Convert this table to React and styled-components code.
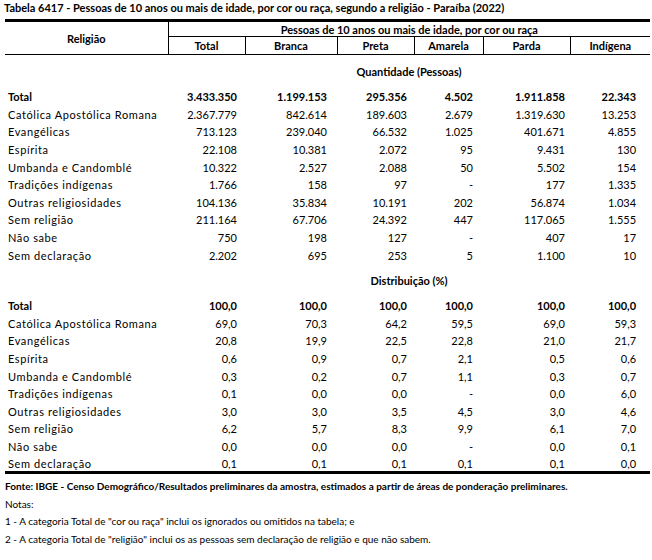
import React from "react";
import styled, { createGlobalStyle } from "styled-components";

const GlobalStyle = createGlobalStyle`
  body {
    margin: 0;
    background: #fff;
    color: #000;
    font-family: Lato, "Liberation Sans", sans-serif;
  }
`;

const COLS = [
  { name: "Total", width: 77, pad: 8 },
  { name: "Branca", width: 92, pad: 10 },
  { name: "Preta", width: 77, pad: 7 },
  { name: "Amarela", width: 69, pad: 10 },
  { name: "Parda", width: 87, pad: 5 },
  { name: "Indígena", width: 80, pad: 14 },
];

const LABELS = [
  "Católica Apostólica Romana",
  "Evangélicas",
  "Espírita",
  "Umbanda e Candomblé",
  "Tradições indígenas",
  "Outras religiosidades",
  "Sem religião",
  "Não sabe",
  "Sem declaração",
];

const quantidade = {
  total: ["3.433.350", "1.199.153", "295.356", "4.502", "1.911.858", "22.343"],
  rows: [
    ["2.367.779", "842.614", "189.603", "2.679", "1.319.630", "13.253"],
    ["713.123", "239.040", "66.532", "1.025", "401.671", "4.855"],
    ["22.108", "10.381", "2.072", "95", "9.431", "130"],
    ["10.322", "2.527", "2.088", "50", "5.502", "154"],
    ["1.766", "158", "97", "-", "177", "1.335"],
    ["104.136", "35.834", "10.191", "202", "56.874", "1.034"],
    ["211.164", "67.706", "24.392", "447", "117.065", "1.555"],
    ["750", "198", "127", "-", "407", "17"],
    ["2.202", "695", "253", "5", "1.100", "10"],
  ],
};

const distribuicao = {
  total: ["100,0", "100,0", "100,0", "100,0", "100,0", "100,0"],
  rows: [
    ["69,0", "70,3", "64,2", "59,5", "69,0", "59,3"],
    ["20,8", "19,9", "22,5", "22,8", "21,0", "21,7"],
    ["0,6", "0,9", "0,7", "2,1", "0,5", "0,6"],
    ["0,3", "0,2", "0,7", "1,1", "0,3", "0,7"],
    ["0,1", "0,0", "0,0", "-", "0,0", "6,0"],
    ["3,0", "3,0", "3,5", "4,5", "3,0", "4,6"],
    ["6,2", "5,7", "8,3", "9,9", "6,1", "7,0"],
    ["0,0", "0,0", "0,0", "-", "0,0", "0,1"],
    ["0,1", "0,1", "0,1", "0,1", "0,1", "0,0"],
  ],
};

const App = () => {
  const renderSection = (title, data) => (
    <>
      <tr>
        <SectionCell />
        <SectionCell colSpan={6}>{title}</SectionCell>
      </tr>
      <DataRow>
        <LabelCell bold>Total</LabelCell>
        {data.total.map((v, i) => (
          <NumCell key={i} bold pad={COLS[i].pad}>
            {v}
          </NumCell>
        ))}
      </DataRow>
      {data.rows.map((row, r) => (
        <DataRow key={r}>
          <LabelCell>{LABELS[r]}</LabelCell>
          {row.map((v, i) => (
            <NumCell key={i} pad={COLS[i].pad}>
              {v}
            </NumCell>
          ))}
        </DataRow>
      ))}
    </>
  );

  return (
    <Page>
      <GlobalStyle />
      <Title>
        Tabela 6417 - Pessoas de 10 anos ou mais de idade, por cor ou raça,
        segundo a religião - Paraíba (2022)
      </Title>
      <Table>
        <colgroup>
          <col style={{ width: 163 }} />
          {COLS.map((c) => (
            <col key={c.name} style={{ width: c.width }} />
          ))}
        </colgroup>
        <thead>
          <HeadRowTop>
            <StubHead rowSpan={2}>Religião</StubHead>
            <GroupHead colSpan={6}>
              Pessoas de 10 anos ou mais de idade, por cor ou raça
            </GroupHead>
          </HeadRowTop>
          <HeadRowBottom>
            {COLS.map((c) => (
              <ColHead key={c.name}>{c.name}</ColHead>
            ))}
          </HeadRowBottom>
        </thead>
        <tbody>
          {renderSection("Quantidade (Pessoas)", quantidade)}
          {renderSection("Distribuição (%)", distribuicao)}
        </tbody>
      </Table>
      <Footer>
        <Source>
          Fonte: IBGE - Censo Demográfico/Resultados preliminares da amostra,
          estimados a partir de áreas de ponderação preliminares.
        </Source>
        <Note>Notas:</Note>
        <Note>
          1 - A categoria Total de "cor ou raça" inclui os ignorados ou
          omitidos na tabela; e
        </Note>
        <Note>
          2 - A categoria Total de "religião" inclui os as pessoas sem
          declaração de religião e que não sabem.
        </Note>
      </Footer>
    </Page>
  );
};

export default App;

const Page = styled.div`
  width: 652px;
  padding-top: 1px;
`;

const Title = styled.div`
  font-size: 11px;
  font-weight: 700;
  line-height: 13px;
  padding-left: 4px;
  height: 18px;
  white-space: nowrap;
`;

const Table = styled.table`
  margin-left: 5px;
  width: 645px;
  table-layout: fixed;
  border-collapse: collapse;
  border-top: 3px solid #000;
  border-bottom: 3px solid #000;
  font-size: 11px;
  td,
  th {
    padding: 0;
  }
`;

const HeadRowTop = styled.tr`
  height: 16px;
`;

const HeadRowBottom = styled.tr`
  height: 18px;
  border-bottom: 1px solid #000;
`;

const StubHead = styled.th`
  font-weight: 700;
  text-align: center;
  vertical-align: middle;
  border-right: 1px solid #000;
`;

const GroupHead = styled.th`
  font-weight: 700;
  text-align: center;
  border-bottom: 1px solid #000;
`;

const ColHead = styled.th`
  font-weight: 700;
  text-align: center;
  border-right: 1px solid #000;
  &:last-child {
    border-right: none;
  }
`;

const SectionCell = styled.td`
  height: 33px;
  font-weight: 700;
  text-align: center;
  vertical-align: middle;
`;

const DataRow = styled.tr`
  height: 17.6px;
`;

const LabelCell = styled.td`
  padding-left: 3px !important;
  font-weight: ${(props) => (props.bold ? 700 : 400)};
  letter-spacing: ${(props) => (props.bold ? "0" : "0.6px")};
  white-space: nowrap;
`;

const NumCell = styled.td`
  text-align: right;
  padding-right: ${(props) => props.pad}px !important;
  font-weight: ${(props) => (props.bold ? 700 : 400)};
`;

const Footer = styled.div`
  padding: 4px 0 0 5px;
  font-size: 10px;
  line-height: 17.5px;
`;

const Source = styled.div`
  font-weight: 700;
  white-space: nowrap;
`;

const Note = styled.div`
  white-space: nowrap;
`;
